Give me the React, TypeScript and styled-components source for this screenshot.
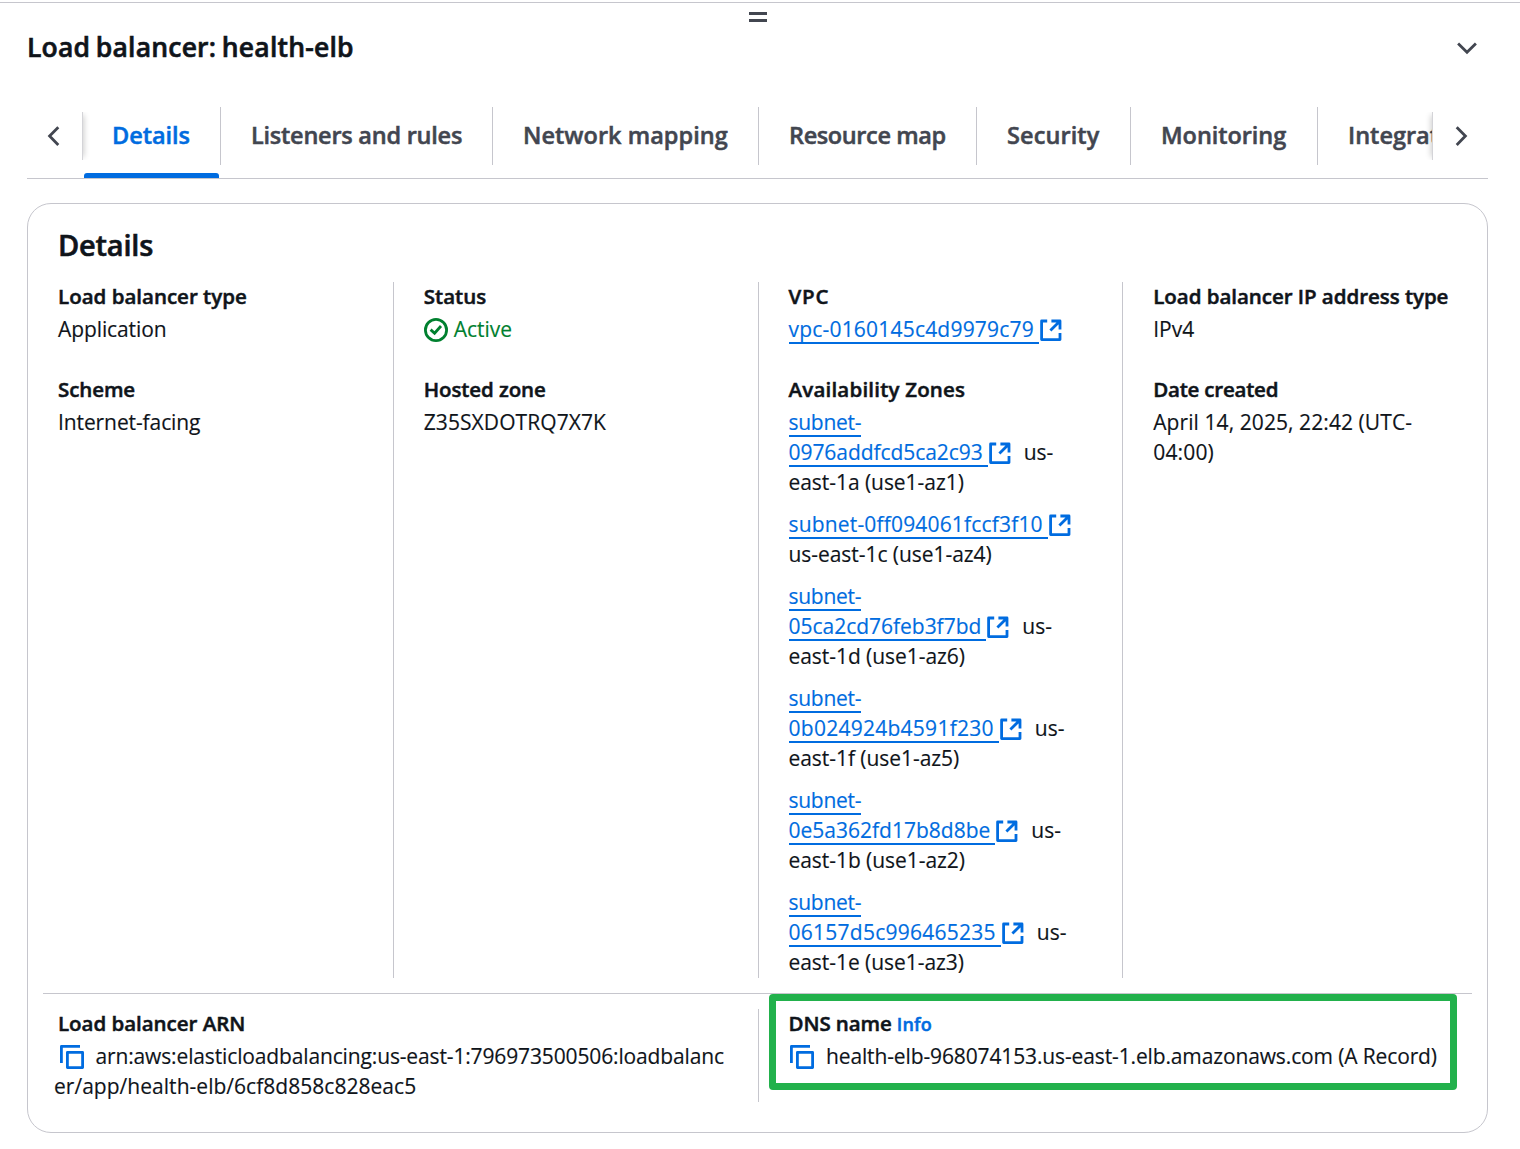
import React from 'react';
import styled, { createGlobalStyle } from 'styled-components';

const GlobalStyle = createGlobalStyle`
  * { box-sizing: border-box; }
  body {
    margin: 0;
    background: #fff;
    color: #0f141a;
    font: 400 21px/28px "Open Sans", "Noto Sans", sans-serif;
    font-kerning: normal;
    -webkit-text-stroke: 0.15px;
    overflow: hidden;
  }
`;

const Page = styled.main`
  margin-top: 2px;
  height: 1147px;
  border-top: 1px solid #c6c6cd;
  padding: 9px 32px 0 27px;
`;

const DragHandle = styled.div`
  display: flex;
  flex-direction: column;
  align-items: center;
  gap: 4px;
`;

const HandleBar = styled.span`
  width: 18px;
  height: 3px;
  background: #424650;
`;

const TitleRow = styled.header`
  display: flex;
  align-items: center;
  justify-content: space-between;
  height: 30px;
  margin-top: 11px;
  padding-right: 9px;
`;

const Title = styled.h2`
  margin: 0;
  padding-bottom: 2px;
  font-size: 26.5px;
  font-weight: 600;
  line-height: 28px;
  letter-spacing: 0.2px;
  word-spacing: -1.5px;
  -webkit-text-stroke: 0.6px;
`;

const Stroke = styled.svg<{ $color?: string }>`
  display: block;
  flex: none;
  width: 24px;
  height: 24px;
  fill: none;
  stroke: ${(p) => p.$color || '#424650'};
  stroke-width: 2.8;
  stroke-linejoin: round;
`;

const TabBar = styled.nav`
  display: flex;
  align-items: flex-start;
  height: 72px;
  margin-top: 44px;
  border-bottom: 1px solid #c6c6cd;
`;

const ScrollButton = styled.button<{ $side: 'left' | 'right' }>`
  display: flex;
  flex: none;
  align-items: center;
  width: 55px;
  height: 48px;
  margin-top: 5px;
  padding: 0 15px;
  border: 0;
  background: #fff;
  z-index: 1;
  box-shadow: ${(p) =>
    p.$side === 'left'
      ? '1px 0 0 #d4d4d8, 5px 0 6px -3px rgba(0,0,0,.2)'
      : '-1px 0 0 #d4d4d8, -5px 0 6px -3px rgba(0,0,0,.2)'};
  clip-path: inset(0 -10px 0 -10px);
`;

const TabList = styled.div`
  display: flex;
  flex: 1;
  min-width: 0;
  height: 71px;
  overflow: hidden;
`;

const Tab = styled.button<{ $w: number; $ls: number; $active?: boolean }>`
  position: relative;
  flex: none;
  width: ${(p) => p.$w}px;
  height: 58px;
  padding: 0 0 2px 30px;
  border: 0;
  border-right: 1px solid #c6c6cd;
  background: none;
  color: ${(p) => (p.$active ? '#006ce0' : '#424650')};
  font: 600 23.5px/56px "Open Sans", "Noto Sans", sans-serif;
  letter-spacing: ${(p) => p.$ls}px;
  text-align: left;
  white-space: nowrap;
  -webkit-text-stroke: 0.5px;
`;

const ActiveLine = styled.span`
  position: absolute;
  left: 2px;
  right: 1px;
  top: 66px;
  height: 5px;
  border-radius: 3px 3px 0 0;
  background: #006ce0;
`;

const Card = styled.section`
  position: relative;
  height: 930px;
  margin-top: 24px;
  padding-top: 24px;
  border: 1px solid #c6c6cd;
  border-radius: 24px;
`;

const CardHeading = styled.h3`
  margin: 0 0 20px 30px;
  font-size: 29px;
  font-weight: 600;
  line-height: 34px;
  letter-spacing: -0.2px;
  -webkit-text-stroke: 0.6px;
`;

const Columns = styled.div<{ $count: number }>`
  display: grid;
  grid-template-columns: repeat(${(p) => p.$count}, minmax(0, 1fr));
`;

const Column = styled.div`
  display: flex;
  flex-direction: column;
  gap: 30px;
  padding-left: 30px;
  border-left: 1px solid #c6c6cd;
  &:first-child { border-left: 0; }
`;

const Divider = styled.hr`
  margin: 15px 15px;
  border: 0;
  border-top: 1px solid #c6c6cd;
`;

const Label = styled.div<{ $ls?: number }>`
  height: 28px;
  margin-bottom: 5px;
  font-size: 20.5px;
  font-weight: 600;
  white-space: nowrap;
  letter-spacing: ${(p) => p.$ls || 0}px;
  -webkit-text-stroke: 0.5px;
`;

const Line = styled.div<{ $ls?: number; $outdent?: boolean }>`
  display: flex;
  height: 30px;
  margin-left: ${(p) => (p.$outdent ? -4 : 0)}px;
  white-space: nowrap;
  letter-spacing: ${(p) => p.$ls || 0}px;
`;

const StatusLine = styled(Line)`
  gap: 6px;
  color: #00802f;
  & > svg { margin-top: 3px; }
`;

const CopyLine = styled(Line)<{ $inset?: number }>`
  gap: ${(p) => 13.5 - (p.$inset ?? 2)}px;
  padding-left: ${(p) => p.$inset ?? 2}px;
  & > svg { margin-top: 3px; }
`;

const LinkText = styled.a<{ $ls?: number; $tail?: boolean }>`
  height: 29px;
  padding-right: ${(p) => (p.$tail ? 5 : 0)}px;
  border-bottom: 2px solid #006ce0;
  color: #006ce0;
  letter-spacing: ${(p) => p.$ls || 0}px;
`;

const LinkIcon = styled.span`
  margin: 3px 12px 0 0;
`;

const SubnetList = styled.div`
  display: flex;
  flex-direction: column;
  gap: 12px;
`;

const InfoLink = styled.a`
  margin-left: 5px;
  color: #006ce0;
  font-size: 18px;
  line-height: 20px;
  letter-spacing: 0.25px;
`;

const Highlight = styled.div`
  position: absolute;
  left: 741px;
  top: 790px;
  width: 688px;
  height: 96px;
  border: 7px solid #22b14c;
  border-radius: 4px;
`;

const External = () => (
  <LinkIcon>
    <Stroke $color="#006ce0" viewBox="0 0 24 24">
      <path d="M8.2 3H2.6v18.6H21V15" />
      <path d="M12.4 3H21v8.4M11.4 12.6 21 3" />
    </Stroke>
  </LinkIcon>
);

const Copy = () => (
  <Stroke $color="#006ce0" viewBox="0 0 24 24">
    <path d="M1.4 18V1.4H20" />
    <path d="M7.4 7.4h15.2v15.2H7.4z" />
  </Stroke>
);

const tabs: [string, number, number][] = [
  ['Details', 139, -0.05],
  ['Listeners and rules', 272, -0.24],
  ['Network mapping', 266, 0.03],
  ['Resource map', 218, -0.38],
  ['Security', 154, 0.1],
  ['Monitoring', 187, -0.06],
  ['Integrations', 180, 0],
];

type Subnet = { head?: string; id: string; ls: number; region?: string; rest: string };
const subnets: Subnet[] = [
  { head: 'subnet-', id: '0976addfcd5ca2c93', ls: -0.06, region: 'us-', rest: 'east-1a (use1-az1)' },
  { id: 'subnet-0ff094061fccf3f10', ls: 0.17, rest: 'us-east-1c (use1-az4)' },
  { head: 'subnet-', id: '05ca2cd76feb3f7bd', ls: -0.02, region: 'us-', rest: 'east-1d (use1-az6)' },
  { head: 'subnet-', id: '0b024924b4591f230', ls: 0.26, region: 'us-', rest: 'east-1f (use1-az5)' },
  { head: 'subnet-', id: '0e5a362fd17b8d8be', ls: 0, region: 'us-', rest: 'east-1b (use1-az2)' },
  { head: 'subnet-', id: '06157d5c996465235', ls: 0.25, region: 'us-', rest: 'east-1e (use1-az3)' },
];

export default function App() {
  return (
    <>
      <GlobalStyle />
      <Page>
        <DragHandle>
          <HandleBar />
          <HandleBar />
        </DragHandle>
        <TitleRow>
          <Title>Load balancer: health-elb</Title>
          <Stroke viewBox="0 0 24 24">
            <path d="m3.1 7.6 8.9 8.7 8.9-8.7" strokeLinejoin="miter" />
          </Stroke>
        </TitleRow>

        <TabBar>
          <ScrollButton $side="left">
            <Stroke viewBox="0 0 24 24">
              <path d="M16.3 3.2 7.6 12l8.7 8.9" strokeLinejoin="miter" />
            </Stroke>
          </ScrollButton>
          <TabList>
            {tabs.map(([name, w, ls], i) => (
              <Tab key={name} $w={w} $ls={ls} $active={i === 0}>
                {name}
                {i === 0 && <ActiveLine />}
              </Tab>
            ))}
          </TabList>
          <ScrollButton $side="right">
            <Stroke viewBox="0 0 24 24">
              <path d="m8.7 3.2 8.7 8.8-8.7 8.9" strokeLinejoin="miter" />
            </Stroke>
          </ScrollButton>
        </TabBar>

        <Card>
          <CardHeading>Details</CardHeading>
          <Columns $count={4}>
            <Column>
              <div>
                <Label>Load balancer type</Label>
                <Line $ls={-0.1}>Application</Line>
              </div>
              <div>
                <Label $ls={-0.1}>Scheme</Label>
                <Line $ls={-0.1}>Internet-facing</Line>
              </div>
            </Column>
            <Column>
              <div>
                <Label>Status</Label>
                <StatusLine>
                  <Stroke $color="#00802f" viewBox="0 0 24 24">
                    <circle cx="12" cy="12" r="10.6" />
                    <path d="m6.6 11.6 4 3.6L17 8" strokeLinejoin="miter" />
                  </Stroke>
                  Active
                </StatusLine>
              </div>
              <div>
                <Label $ls={-0.1}>Hosted zone</Label>
                <Line $ls={0.08}>Z35SXDOTRQ7X7K</Line>
              </div>
            </Column>
            <Column>
              <div>
                <Label $ls={0.8}>VPC</Label>
                <Line>
                  <LinkText $ls={0.2} $tail>vpc-0160145c4d9979c79</LinkText>
                  <External />
                </Line>
              </div>
              <div>
                <Label $ls={0.2}>Availability Zones</Label>
                <SubnetList>
                  {subnets.map((s) => (
                    <div key={s.id}>
                      {s.head && (
                        <Line>
                          <LinkText $ls={-0.26}>{s.head}</LinkText>
                        </Line>
                      )}
                      <Line>
                        <LinkText $ls={s.ls} $tail>{s.id}</LinkText>
                        <External />
                        {s.region}
                      </Line>
                      <Line $ls={-0.05}>{s.rest}</Line>
                    </div>
                  ))}
                </SubnetList>
              </div>
            </Column>
            <Column>
              <div>
                <Label $ls={-0.04}>Load balancer IP address type</Label>
                <Line>IPv4</Line>
              </div>
              <div>
                <Label $ls={-0.22}>Date created</Label>
                <Line $ls={0.08}>April 14, 2025, 22:42 (UTC-</Line>
                <Line $ls={0.15}>04:00)</Line>
              </div>
            </Column>
          </Columns>
          <Divider />
          <Columns $count={2}>
            <Column>
              <div>
                <Label $ls={-0.03}>Load balancer ARN</Label>
                <CopyLine $ls={-0.14}>
                  <Copy />
                  arn:aws:elasticloadbalancing:us-east-1:796973500506:loadbalanc
                </CopyLine>
                <Line $ls={0.03} $outdent>er/app/health-elb/6cf8d858c828eac5</Line>
              </div>
            </Column>
            <Column>
              <div>
                <Label $ls={-0.1}>
                  DNS name<InfoLink>Info</InfoLink>
                </Label>
                <CopyLine $ls={-0.13} $inset={1.5}>
                  <Copy />
                  health-elb-968074153.us-east-1.elb.amazonaws.com (A Record)
                </CopyLine>
              </div>
            </Column>
          </Columns>
          <Highlight />
        </Card>
      </Page>
    </>
  );
}
